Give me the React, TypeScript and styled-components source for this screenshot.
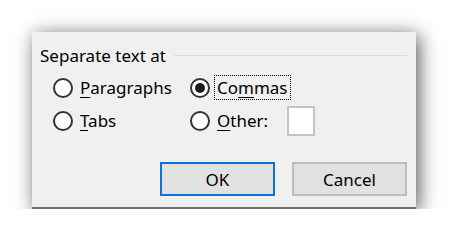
import React from "react";
import styled, { createGlobalStyle } from "styled-components";

const Global = createGlobalStyle`
  html, body { margin: 0; padding: 0; background: #ffffff; }
  body { font-family: "Noto Sans", "Open Sans", sans-serif; }
`;

const Page = styled.div`
  padding: 32px 0 0 32px;
`;

const Dialog = styled.div`
  width: 384px;
  height: 177px;
  box-sizing: border-box;
  background: #f0f0f0;
  border-bottom: 2px solid #6f6f6f;
  box-shadow: 3px 3px 18px rgba(0, 0, 0, 0.65);
  padding: 13px 9px 0 8px;
  display: flex;
  flex-direction: column;
  color: #000;
  font-size: 17px;
`;

const GroupHeader = styled.div`
  display: flex;
  align-items: center;
  gap: 8px;
  height: 20px;
`;

const GroupLabel = styled.span`
  white-space: nowrap;
`;

const Rule = styled.div`
  flex: 1;
  height: 1px;
  background: #dadada;
`;

const Options = styled.div`
  display: grid;
  grid-template-columns: 137px auto;
  grid-auto-rows: 33px;
  margin: 6px 0 0 13px;
`;

const Option = styled.label`
  display: flex;
  align-items: center;
  gap: 7px;
`;

const Circle = styled.span<{ $checked?: boolean }>`
  width: 20px;
  height: 20px;
  box-sizing: border-box;
  border-radius: 50%;
  border: 2px solid #333;
  background: #fff;
  display: flex;
  align-items: center;
  justify-content: center;
  flex: none;
  &::after {
    content: "";
    width: 10px;
    height: 10px;
    border-radius: 50%;
    background: ${(p) => (p.$checked ? "#1b1b1b" : "transparent")};
  }
`;

const Text = styled.span<{ $focus?: boolean }>`
  padding: 0 2px;
  margin-left: -2px;
  line-height: 23px;
  outline: ${(p) => (p.$focus ? "1px dotted #000" : "none")};
  white-space: nowrap;
`;

const Key = styled.u`
  text-underline-offset: 3px;
`;

const OtherBox = styled.span`
  width: 28px;
  height: 30px;
  box-sizing: border-box;
  background: #fff;
  border: 2px solid #c4c4c4;
  margin-left: 10px;
`;

const Buttons = styled.div`
  margin-top: auto;
  margin-bottom: 11px;
  display: flex;
  justify-content: flex-end;
  gap: 17px;
`;

const Button = styled.button<{ $default?: boolean }>`
  width: 115px;
  height: 34px;
  box-sizing: border-box;
  background: #e1e1e1;
  border: 2px solid ${(p) => (p.$default ? "#0a74d8" : "#bdbdbd")};
  font-family: inherit;
  font-size: 17px;
  color: #000;
  padding: 0;
`;

export default function App() {
  return (
    <>
      <Global />
      <Page>
        <Dialog>
          <GroupHeader>
            <GroupLabel>Separate text at</GroupLabel>
            <Rule />
          </GroupHeader>
          <Options>
            <Option>
              <Circle />
              <Text>
                <Key>P</Key>aragraphs
              </Text>
            </Option>
            <Option>
              <Circle $checked />
              <Text $focus>
                Co<Key>m</Key>mas
              </Text>
            </Option>
            <Option>
              <Circle />
              <Text>
                <Key>T</Key>abs
              </Text>
            </Option>
            <Option>
              <Circle />
              <Text>
                <Key>O</Key>ther:
              </Text>
              <OtherBox />
            </Option>
          </Options>
          <Buttons>
            <Button $default>OK</Button>
            <Button>Cancel</Button>
          </Buttons>
        </Dialog>
      </Page>
    </>
  );
}
